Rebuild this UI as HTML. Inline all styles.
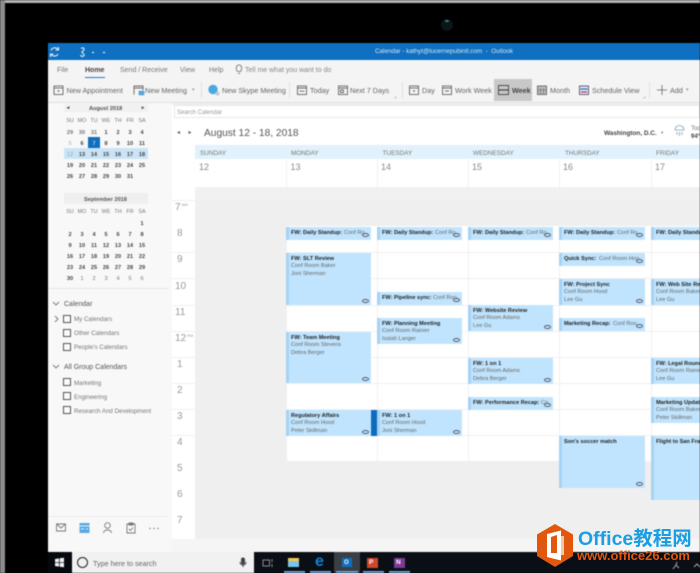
<!DOCTYPE html>
<html><head><meta charset="utf-8">
<style>
html,body{margin:0;padding:0;background:#000}
#p{position:relative;width:700px;height:573px;overflow:hidden;background:#000;font-family:"Liberation Sans","Noto Sans CJK SC",sans-serif}
#b{position:absolute;left:0;top:0;width:700px;height:573px;filter:blur(.45px)}
#b div,#b span,#b svg{position:absolute}
span{white-space:nowrap;line-height:1}
.t{font-size:7.2px;color:#666;top:87px}
.m{font-size:7px;color:#777;top:67px}
.d{font-size:6.4px;color:#777;top:150.5px}
.n{font-size:9px;color:#888;top:163px}
.h{font-size:10px;color:#999;left:175px}
.c{font-size:5.6px;font-weight:bold;color:#444;width:12px;text-align:center;margin-top:2px}
.l{font-size:5.4px;color:#777;width:12px;text-align:center;margin-top:2px}
.e{background:#c0e4fd;border-left:3px solid #a6d3f4;box-sizing:border-box;overflow:hidden}
.e span{left:2px;font-size:5.6px;color:#666;margin-top:1.5px}
.e span.a{top:2px;color:#222;font-weight:bold}
.e span.a2{top:9.5px}
.e span.a3{top:17px}
.e span.o{top:2px;font-size:5.6px;color:#666}
.e span.a.x{top:2px}
.e em{position:absolute;right:2px;bottom:2px;width:7px;height:4px;border:1px solid #556;border-radius:50%;box-sizing:border-box}
.e em.y{bottom:3px}
.s{font-size:6.2px;color:#777;left:74px;margin-top:1px}
.g{font-size:7px;color:#555;left:64px;margin-top:1px}
.k{left:63px;width:6px;height:6px;border:1px solid #555;background:#fafafa}
.v{width:1px;background:#f0f0f0;top:160px;height:379px}
.r{height:1px;background:#f0f0f0;left:172px;width:528px}
</style></head><body><div id="p"><div id="b">
<!-- bezel -->
<div style="left:0;top:0;width:700px;height:3px;background:#b5b5b5"></div>
<div style="left:0;top:0;width:5px;height:573px;background:#8c8c8c"></div>
<div style="left:5px;top:4px;width:695px;height:569px;background:#000;border-radius:12px 0 0 0"></div>
<div style="left:441px;top:19px;width:12px;height:12px;background:#0c1518;border-radius:50%"></div>
<div style="left:445px;top:20px;width:4px;height:2px;background:#2c8b78;border-radius:50%"></div>

<!-- window -->
<div style="left:48px;top:43px;width:652px;height:509px;background:#f4f4f4"></div>
<div style="left:48px;top:43px;width:652px;height:17px;background:#0f6fc0"></div>
<span style="left:375px;top:48.5px;font-size:6.3px;color:#d5e8f7">Calendar - kathyt@lucernepubintl.com&nbsp; - &nbsp;Outlook</span>
<svg style="left:49px;top:46px" width="60" height="12" viewBox="0 0 60 12" fill="none" stroke="#e2eef9" stroke-width="1.100"><path d="M9 3.500a4 4 0 0 0-7 1M2 8a4 4 0 0 0 7 0M9.500 1v3H6.500M1.500 11V8h3"/><path d="M32 2.500c2-1.500 4 0 2.500 2s-2.500 1-1 2.500 2.500 2 1 3-3.500 0-2.500-1"/><path d="M43 6.500h2M54 6.500h2" stroke-width="1.200"/></svg>

<!-- menu -->
<span class="m" style="left:57px">File</span>
<span class="m" style="left:85px;color:#444;font-weight:bold">Home</span>
<div style="left:85px;top:76.500px;width:20px;height:1.500px;background:#2878bd"></div>
<span class="m" style="left:120px">Send / Receive</span>
<span class="m" style="left:180px">View</span>
<span class="m" style="left:209px">Help</span>
<svg style="left:235px;top:64px" width="8" height="11" viewBox="0 0 8 11" fill="none" stroke="#666" stroke-width=".8"><path d="M2.500 7.500C.5 5 1 1 4 1s3.500 4 1.500 6.500ZM3 9.500h2"/></svg>
<span class="m" style="left:245px;color:#888">Tell me what you want to do</span>

<!-- ribbon -->
<div style="left:494px;top:79px;width:38px;height:22px;background:#c8c8c8"></div>
<svg style="left:0;top:80px" width="700" height="22" viewBox="0 80 700 22" fill="none" stroke="#666" stroke-width=".9">
<rect x="54" y="86" width="9" height="8.500"/><path d="M54 88h9"/><path d="M57.500 91h2" stroke-width="1.200"/>
<path d="M134 94.500V86h9v4M134 88h9"/><rect x="139" y="91" width="5" height="4" fill="#5aa6dc" stroke="#4a90c8" stroke-width=".5"/>
<circle cx="213" cy="89.500" r="4.700" fill="#49a9de" stroke="none"/><circle cx="217.500" cy="93.500" r="2" fill="#bfc9d2" stroke="none"/>
<rect x="297.500" y="86" width="9" height="8.500"/><path d="M297.500 88h9M299.500 91.200h5"/>
<rect x="338.500" y="86" width="9" height="8.500"/><path d="M338.500 88h9M340.500 90h3v2.500h-3z"/>
<rect x="409.500" y="86" width="9" height="8.500"/><path d="M409.500 88h9"/><path d="M413 91h2" stroke-width="1.200"/>
<rect x="442.500" y="86" width="9" height="8.500"/><path d="M442.500 88h9M445 91h4"/>
<rect x="498.500" y="85.500" width="10" height="9" stroke="#444"/><path d="M498.500 90h10" stroke="#444" stroke-width="1.200"/>
<rect x="537.500" y="86" width="9" height="8.500" fill="#bdbdbd"/><path d="M537.500 90h9M540.500 88v6M543.500 88v6" stroke-width=".6"/>
<rect x="579.500" y="86" width="9" height="8.500" fill="#dfe8f3" stroke="#556"/><path d="M580.500 89h7" stroke="#3f73b5" stroke-width="1.300"/><path d="M581 92h6" stroke="#c43a60" stroke-width="1.300"/>
<path d="M657 90h10M662 85v10" stroke-width=".8"/>
<path d="M201.500 82v16M289.500 82v16M402.500 82v16M649.500 82v16" stroke="#ddd"/>
<path d="M394 98h2v-2M643 98h2v-2" stroke="#aaa" stroke-width=".6"/>
</svg>
<span class="t" style="left:66.500px">New Appointment</span>
<span class="t" style="left:145px">New Meeting</span>
<span class="t" style="left:192px;color:#999;font-size:5px;top:88px">▾</span>
<span class="t" style="left:222px">New Skype Meeting</span>
<span class="t" style="left:310px">Today</span>
<span class="t" style="left:350px">Next 7 Days</span>
<span class="t" style="left:422px">Day</span>
<span class="t" style="left:455px">Work Week</span>
<span class="t" style="left:512px;color:#444;font-weight:bold">Week</span>
<span class="t" style="left:550px">Month</span>
<span class="t" style="left:592px">Schedule View</span>
<span class="t" style="left:670px">Add</span>
<span class="t" style="left:686px;color:#999;font-size:5px;top:88px">▾</span>
<div style="left:48px;top:102px;width:652px;height:1px;background:#e2e2e2"></div>

<!-- left pane -->
<div style="left:48px;top:103px;width:124px;height:449px;background:#f8f8f8"></div>
<div style="left:64px;top:104px;width:84px;height:8px;background:#f1f1f1"></div>
<span class="c" style="left:62px;top:104px;font-size:5px">◂</span><span class="c" style="left:137px;top:104px;font-size:5px">▸</span>
<span style="left:89px;top:106.500px;font-size:5.6px;font-weight:bold;color:#555">August 2018</span>
<!-- Aug -->
<span class="l" style="left:64px;top:117px">SU</span><span class="l" style="left:76px;top:117px">MO</span><span class="l" style="left:88px;top:117px">TU</span><span class="l" style="left:100px;top:117px">WE</span><span class="l" style="left:112px;top:117px">TH</span><span class="l" style="left:124px;top:117px">FR</span><span class="l" style="left:136px;top:117px">SA</span>
<span class="c" style="left:64px;top:129px;color:#777">29</span><span class="c" style="left:76px;top:129px;color:#777">30</span><span class="c" style="left:88px;top:129px;color:#777">31</span><span class="c" style="left:100px;top:129px">1</span><span class="c" style="left:112px;top:129px">2</span><span class="c" style="left:124px;top:129px">3</span><span class="c" style="left:136px;top:129px">4</span>
<div style="left:88px;top:137px;width:12px;height:11px;background:#106ebe"></div>
<span class="c" style="left:64px;top:140px;color:#aaa;font-weight:normal">5</span><span class="c" style="left:76px;top:140px">6</span><span class="c" style="left:88px;top:140px;color:#bcd">7</span><span class="c" style="left:100px;top:140px">8</span><span class="c" style="left:112px;top:140px">9</span><span class="c" style="left:124px;top:140px">10</span><span class="c" style="left:136px;top:140px">11</span>
<div style="left:64px;top:148px;width:84px;height:11px;background:#cae3f6"></div>
<span class="c" style="left:64px;top:151px;color:#8aa;font-weight:normal">12</span><span class="c" style="left:76px;top:151px">13</span><span class="c" style="left:88px;top:151px">14</span><span class="c" style="left:100px;top:151px">15</span><span class="c" style="left:112px;top:151px">16</span><span class="c" style="left:124px;top:151px">17</span><span class="c" style="left:136px;top:151px">18</span>
<span class="c" style="left:64px;top:162px">19</span><span class="c" style="left:76px;top:162px">20</span><span class="c" style="left:88px;top:162px">21</span><span class="c" style="left:100px;top:162px">22</span><span class="c" style="left:112px;top:162px">23</span><span class="c" style="left:124px;top:162px">24</span><span class="c" style="left:136px;top:162px">25</span>
<span class="c" style="left:64px;top:173px">26</span><span class="c" style="left:76px;top:173px">27</span><span class="c" style="left:88px;top:173px">28</span><span class="c" style="left:100px;top:173px">29</span><span class="c" style="left:112px;top:173px">30</span><span class="c" style="left:124px;top:173px">31</span>
<!-- Sep -->
<div style="left:64px;top:193px;width:84px;height:11px;background:#efefef"></div>
<span style="left:84px;top:197.500px;font-size:5.6px;font-weight:bold;color:#555">September 2018</span>
<span class="l" style="left:64px;top:208px">SU</span><span class="l" style="left:76px;top:208px">MO</span><span class="l" style="left:88px;top:208px">TU</span><span class="l" style="left:100px;top:208px">WE</span><span class="l" style="left:112px;top:208px">TH</span><span class="l" style="left:124px;top:208px">FR</span><span class="l" style="left:136px;top:208px">SA</span>
<span class="c" style="left:136px;top:220px">1</span>
<span class="c" style="left:64px;top:231px">2</span><span class="c" style="left:76px;top:231px">3</span><span class="c" style="left:88px;top:231px">4</span><span class="c" style="left:100px;top:231px">5</span><span class="c" style="left:112px;top:231px">6</span><span class="c" style="left:124px;top:231px">7</span><span class="c" style="left:136px;top:231px">8</span>
<span class="c" style="left:64px;top:242px">9</span><span class="c" style="left:76px;top:242px">10</span><span class="c" style="left:88px;top:242px">11</span><span class="c" style="left:100px;top:242px">12</span><span class="c" style="left:112px;top:242px">13</span><span class="c" style="left:124px;top:242px">14</span><span class="c" style="left:136px;top:242px">15</span>
<span class="c" style="left:64px;top:253px">16</span><span class="c" style="left:76px;top:253px">17</span><span class="c" style="left:88px;top:253px">18</span><span class="c" style="left:100px;top:253px">19</span><span class="c" style="left:112px;top:253px">20</span><span class="c" style="left:124px;top:253px">21</span><span class="c" style="left:136px;top:253px">22</span>
<span class="c" style="left:64px;top:264px">23</span><span class="c" style="left:76px;top:264px">24</span><span class="c" style="left:88px;top:264px">25</span><span class="c" style="left:100px;top:264px">26</span><span class="c" style="left:112px;top:264px">27</span><span class="c" style="left:124px;top:264px">28</span><span class="c" style="left:136px;top:264px">29</span>
<span class="c" style="left:64px;top:275px">30</span><span class="c" style="left:76px;top:275px;color:#777;font-weight:normal">1</span><span class="c" style="left:88px;top:275px;color:#777;font-weight:normal">2</span><span class="c" style="left:100px;top:275px;color:#777;font-weight:normal">3</span><span class="c" style="left:112px;top:275px;color:#777;font-weight:normal">4</span><span class="c" style="left:124px;top:275px;color:#777;font-weight:normal">5</span><span class="c" style="left:136px;top:275px;color:#777;font-weight:normal">6</span>
<div style="left:48px;top:288px;width:120px;height:1px;background:#e6e6e6"></div>

<svg style="left:52px;top:298px" width="10" height="120" viewBox="0 0 10 120" fill="none" stroke="#777" stroke-width=".9"><path d="M1 4l3 3 3-3M3 18l3 3-3 3M1 67l3 3 3-3"/></svg>
<span class="g" style="top:299.500px">Calendar</span>
<div class="k" style="top:315px"></div><span class="s" style="top:315.500px">My Calendars</span>
<div class="k" style="top:329px"></div><span class="s" style="top:330px">Other Calendars</span>
<div class="k" style="top:343px"></div><span class="s" style="top:344px">People's Calendars</span>
<span class="g" style="top:363px">All Group Calendars</span>
<div class="k" style="top:378px"></div><span class="s" style="top:379.500px">Marketing</span>
<div class="k" style="top:392px"></div><span class="s" style="top:393.500px">Engineering</span>
<div class="k" style="top:406px"></div><span class="s" style="top:407.500px">Research And Development</span>
<div style="left:48px;top:516px;width:120px;height:1px;background:#ececec"></div>
<svg style="left:54px;top:521px" width="110" height="15" viewBox="0 0 110 15" fill="none" stroke="#777" stroke-width=".9">
<path d="M2.500 3h9v7h-9zM2.500 3l4.500 4 4.500-4"/>
<rect x="25.500" y="2" width="10" height="10" fill="#5aa9e3" stroke="none"/><path d="M25.500 5h10M27 8h3M32 8h2" stroke="#e4f1fb"/>
<circle cx="53.500" cy="4.500" r="2.800"/><path d="M49.500 12c0-4 8-4 8 0"/>
<path d="M73 3h8v9h-8zM75 2h4v2h-4zM75 8l1.500 1.500 2.500-3"/>
<circle cx="96" cy="7.500" r=".7" fill="#777" stroke="none"/><circle cx="100" cy="7.500" r=".7" fill="#777" stroke="none"/><circle cx="104" cy="7.500" r=".7" fill="#777" stroke="none"/>
</svg>

<!-- calendar head -->
<div style="left:172px;top:103px;width:528px;height:449px;background:#fff"></div>
<div style="left:172px;top:103px;width:528px;height:1.500px;background:#eee"></div>
<div style="left:174px;top:105px;width:526px;height:13px;background:#fff;border:1px solid #e8e8e8;box-sizing:border-box"></div>
<span style="left:177px;top:109.500px;font-size:6px;color:#999">Search Calendar</span>
<span style="left:177px;top:130px;font-size:6px;color:#555">◂</span><span style="left:188.500px;top:130px;font-size:6px;color:#555">▸</span>
<span style="left:204px;top:128.500px;font-size:10.200px;color:#555">August 12 - 18, 2018</span>
<span style="left:604px;top:130.500px;font-size:6.400px;font-weight:bold;color:#444">Washington, D.C.</span>
<span style="left:661px;top:131px;font-size:4.500px;color:#777">▾</span>
<svg style="left:673px;top:124px" width="13" height="13" viewBox="0 0 13 13" fill="none" stroke="#7a9fb8" stroke-width=".8"><path d="M2 6a4.500 4.500 0 0 1 9 0zM4 8v3M6.500 8v4M9 8v3"/></svg>
<span style="left:691px;top:126px;font-size:6px;color:#777">Tod</span>
<span style="left:691px;top:134px;font-size:6px;font-weight:bold;color:#444">94°</span>

<!-- grid -->
<div style="left:195px;top:145px;width:505px;height:14px;background:#e1f2fc"></div>
<span class="d" style="left:200px">SUNDAY</span><span class="d" style="left:291px">MONDAY</span><span class="d" style="left:382.500px">TUESDAY</span><span class="d" style="left:473px">WEDNESDAY</span><span class="d" style="left:565px">THURSDAY</span><span class="d" style="left:656px">FRIDAY</span>
<span class="n" style="left:199px">12</span><span class="n" style="left:290.500px">13</span><span class="n" style="left:381px">14</span><span class="n" style="left:472px">15</span><span class="n" style="left:563px">16</span><span class="n" style="left:655px">17</span>
<div style="left:172px;top:187px;width:528px;height:13px;background:#f1f1f1"></div>
<div style="left:172px;top:187px;width:23px;height:13px;background:#fff"></div>
<div style="left:195px;top:200px;width:505px;height:339px;background:#efefef"></div>
<div style="left:286px;top:226px;width:414px;height:235px;background:#fff"></div>
<div style="left:172px;top:539px;width:528px;height:13px;background:#f5f5f5"></div>
<div class="v" style="left:286px"></div><div class="v" style="left:377px"></div><div class="v" style="left:468px"></div><div class="v" style="left:559px"></div><div class="v" style="left:651px"></div>
<div class="r" style="top:200px"></div><div class="r" style="top:252px"></div><div class="r" style="top:278px"></div><div class="r" style="top:305px"></div><div class="r" style="top:331px"></div><div class="r" style="top:357px"></div><div class="r" style="top:383px"></div><div class="r" style="top:409px"></div><div class="r" style="top:435px"></div>

<span class="h" style="top:203px">7<span style="position:relative;font-size:4px;top:-4px;left:1px">AM</span></span>
<span class="h" style="top:229px;left:177px">8</span><span class="h" style="top:255px;left:177px">9</span><span class="h" style="top:282px">10</span><span class="h" style="top:307.500px">11</span>
<span class="h" style="top:334px">12<span style="position:relative;font-size:4px;top:-4px;left:1px">PM</span></span>
<span class="h" style="top:360px;left:177px">1</span><span class="h" style="top:386px;left:177px">2</span><span class="h" style="top:412px;left:177px">3</span><span class="h" style="top:438px;left:177px">4</span><span class="h" style="top:464px;left:177px">5</span><span class="h" style="top:490px;left:177px">6</span><span class="h" style="top:516px;left:177px">7</span>

<!-- Monday -->
<div class="e" style="left:286px;top:227px;width:85px;height:13px"><span class="a x">FW: Daily Standup:</span><span class="o" style="left:55px">Conf Ro</span><em class="y"></em></div>
<div class="e" style="left:286px;top:253px;width:85px;height:52px"><span class="a">FW: SLT Review</span><span class="a2">Conf Room Baker</span><span class="a3">Joni Sherman</span><em></em></div>
<div class="e" style="left:286px;top:332px;width:85px;height:51px"><span class="a">FW: Team Meeting</span><span class="a2">Conf Room Stevens</span><span class="a3">Debra Berger</span><em></em></div>
<div class="e" style="left:286px;top:410px;width:85px;height:26px"><span class="a">Regulatory Affairs</span><span class="a2">Conf Room Hood</span><span class="a3">Peter Skillman</span><em></em></div>
<div style="left:371px;top:410px;width:6px;height:26px;background:#0f6cbd"></div>
<!-- Tuesday -->
<div class="e" style="left:377px;top:227px;width:85px;height:13px"><span class="a x">FW: Daily Standup:</span><span class="o" style="left:55px">Conf Ro</span><em class="y"></em></div>
<div class="e" style="left:377px;top:292px;width:85px;height:13px"><span class="a x">FW: Pipeline sync:</span><span class="o" style="left:53px">Conf Roo</span><em class="y"></em></div>
<div class="e" style="left:377px;top:318px;width:85px;height:26px"><span class="a">FW: Planning Meeting</span><span class="a2">Conf Room Rainier</span><span class="a3">Isaiah Langer</span><em></em></div>
<div class="e" style="left:377px;top:410px;width:85px;height:26px"><span class="a">FW: 1 on 1</span><span class="a2">Conf Room Hood</span><span class="a3">Joni Sherman</span><em></em></div>
<!-- Wednesday -->
<div class="e" style="left:468px;top:227px;width:85px;height:13px"><span class="a x">FW: Daily Standup:</span><span class="o" style="left:55px">Conf Ro</span><em class="y"></em></div>
<div class="e" style="left:468px;top:305px;width:85px;height:26px"><span class="a">FW: Website Review</span><span class="a2">Conf Room Adams</span><span class="a3">Lee Gu</span><em></em></div>
<div class="e" style="left:468px;top:358px;width:85px;height:26px"><span class="a">FW: 1 on 1</span><span class="a2">Conf Room Adams</span><span class="a3">Debra Berger</span><em></em></div>
<div class="e" style="left:468px;top:397px;width:85px;height:13px"><span class="a x">FW: Performance Recap:</span><span class="o" style="left:70px">Co</span><em class="y"></em></div>
<!-- Thursday -->
<div class="e" style="left:559px;top:227px;width:86px;height:13px"><span class="a x">FW: Daily Standup:</span><span class="o" style="left:55px">Conf Ro</span><em class="y"></em></div>
<div class="e" style="left:559px;top:253px;width:86px;height:13px"><span class="a x">Quick Sync:</span><span class="o" style="left:37px">Conf Room Hoo</span><em class="y"></em></div>
<div class="e" style="left:559px;top:279px;width:86px;height:26px"><span class="a">FW: Project Sync</span><span class="a2">Conf Room Hood</span><span class="a3">Lee Gu</span><em></em></div>
<div class="e" style="left:559px;top:318px;width:86px;height:13px"><span class="a x">Marketing Recap:</span><span class="o" style="left:51px">Conf Roo</span><em class="y"></em></div>
<div class="e" style="left:559px;top:436px;width:86px;height:52px"><span class="a">Son's soccer match</span><em></em></div>
<!-- Friday -->
<div class="e" style="left:651px;top:227px;width:49px;height:13px"><span class="a x">FW: Daily Standup:</span></div>
<div class="e" style="left:651px;top:279px;width:49px;height:26px"><span class="a">FW: Web Site Review</span><span class="a2">Conf Room Baker</span><span class="a3">Lee Gu</span></div>
<div class="e" style="left:651px;top:358px;width:49px;height:26px"><span class="a">FW: Legal Roundup</span><span class="a2">Conf Room Rainier</span><span class="a3">Lee Gu</span></div>
<div class="e" style="left:651px;top:397px;width:49px;height:26px"><span class="a">Marketing Update</span><span class="a2">Conf Room Baker</span><span class="a3">Peter Skillman</span></div>
<div class="e" style="left:651px;top:436px;width:49px;height:64px"><span class="a">Flight to San Francisco</span></div>

<!-- taskbar -->
<div style="left:48px;top:552px;width:652px;height:21px;background:#0a0f15"></div>
<div style="left:48px;top:552px;width:24px;height:21px;background:#05080c"></div>
<svg style="left:54px;top:557px" width="11" height="11" viewBox="0 0 11 11" fill="#f2f2f2"><path d="M1 2l4-.6v3.800H1zM5.700 1.300L10 .7v4.500H5.700zM1 5.900h4v3.700l-4-.6zM5.700 5.900H10v4.400l-4.300-.6z"/></svg>
<div style="left:72px;top:552px;width:182px;height:21px;background:#f1f1f1"></div>
<div style="left:77px;top:557px;width:11px;height:11px;border:1.500px solid #222;border-radius:50%;box-sizing:border-box"></div>
<span style="left:93px;top:560px;font-size:7.200px;color:#666">Type here to search</span>
<svg style="left:239px;top:557px" width="8" height="11" viewBox="0 0 8 11" fill="none" stroke="#444" stroke-width="1"><rect x="2.500" y="1" width="3" height="6" rx="1.500" fill="#444"/><path d="M1 5c0 4 6 4 6 0M4 8v2"/></svg>
<svg style="left:262px;top:558px" width="12" height="10" viewBox="0 0 12 10" fill="none" stroke="#aaa" stroke-width=".8"><rect x="1" y="2" width="6.500" height="6"/><path d="M10 1v3M10 6v3"/></svg>
<div style="left:288px;top:558px;width:11px;height:9px;background:#f3c94f"></div><div style="left:288px;top:561px;width:11px;height:6px;background:#7ec4ea"></div>
<div style="left:284px;top:571px;width:21px;height:2px;background:#6aa5d0"></div>
<span style="left:315px;top:554px;font-size:16px;font-weight:bold;color:#0f82dc">e</span>
<div style="left:310px;top:571px;width:21px;height:2px;background:#6aa5d0"></div>
<div style="left:334px;top:552px;width:26px;height:21px;background:#3a3f45"></div>
<div style="left:342px;top:558px;width:10px;height:9px;background:#0f6fc0"></div><span style="left:344px;top:559.500px;font-size:6px;font-weight:bold;color:#fff">O</span>
<div style="left:336px;top:571px;width:22px;height:2px;background:#6aa5d0"></div>
<div style="left:367px;top:558px;width:11px;height:10px;background:#d0472c"></div><span style="left:369px;top:559.500px;font-size:6.500px;font-weight:bold;color:#fff">P</span>
<div style="left:363px;top:571px;width:21px;height:2px;background:#6aa5d0"></div>
<div style="left:394px;top:558px;width:11px;height:10px;background:#7b3a96"></div><span style="left:396px;top:559.500px;font-size:6.500px;font-weight:bold;color:#fff">N</span>
<div style="left:389px;top:571px;width:21px;height:2px;background:#6aa5d0"></div>
<svg style="left:672px;top:560px" width="28" height="13" viewBox="0 0 28 13" fill="none" stroke="#aaa" stroke-width="1"><path d="M1 9l3-4 3 3M4 5l1-3M22 7l3-3 3 3"/></svg>
</div>

<!-- watermark -->
<svg style="position:absolute;left:537px;top:524px" width="36" height="43" viewBox="0 0 36 43"><path d="M18 0L36 10.500V32L18 43 0 32V10.500Z" fill="#e2570e"/><path d="M10 10l14-3.500v30L10 33Zm4 3v16h6V11Z" fill="#fff"/><path d="M24 12h3v19h-3z" fill="#f6c7a4"/></svg>
<span style="position:absolute;left:578px;top:530px;font-size:19.500px;line-height:1;font-weight:bold;color:#1a9fe3;white-space:nowrap">Office教程网</span>
<span style="position:absolute;left:577px;top:549px;font-size:13px;line-height:1;font-weight:bold;color:#e2570e;white-space:nowrap">www.office26.com</span>
</div></body></html>
